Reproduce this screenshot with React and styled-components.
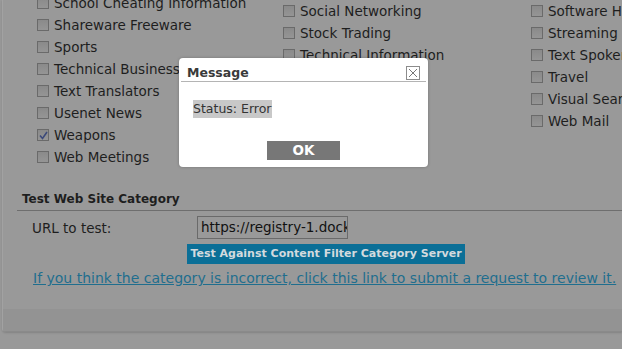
import React from "react";
import styled, { createGlobalStyle } from "styled-components";

const GlobalStyle = createGlobalStyle`
    html, body {
        margin: 0;
        padding: 0;
        background: #999999;
        overflow: hidden;
    }
    body {
        font-family: "DejaVu Sans", "Liberation Sans", sans-serif;
        color: #1e1e1e;
    }
`;

const Page = styled.div`
    position: relative;
    width: 622px;
    height: 349px;
    overflow: hidden;
`;

const Panel = styled.div`
    margin-left: 2px;
    height: 331px;
    border-left: 1px solid #a2a2a2;
    border-bottom: 1px solid #8a8a8a;
    border-radius: 0 0 0 4px;
    display: flex;
    flex-direction: column;
    box-shadow: 0 1px 2px rgba(0, 0, 0, 0.15);
`;

const Grid = styled.div`
    display: flex;
    margin-top: -8px;
`;

const Column = styled.div`
    width: ${(p) => p.width}px;
    padding-left: ${(p) => p.left}px;
    padding-top: ${(p) => p.top || 0}px;
    box-sizing: border-box;
    display: flex;
    flex-direction: column;
    flex-shrink: 0;
`;

const Item = styled.label`
    display: flex;
    align-items: center;
    height: 22px;
    font-size: 13.5px;
    white-space: nowrap;
`;

const Box = styled.span`
    width: 10px;
    height: 10px;
    border: 1px solid #6a6a6a;
    background: linear-gradient(#8a8a8a, #959595);
    margin-right: 5px;
    display: inline-flex;
    align-items: center;
    justify-content: center;
    flex-shrink: 0;
`;

const Section = styled.div`
    margin-top: 24px;
    padding-left: 14px;
    display: flex;
    flex-direction: column;
    align-items: flex-start;
`;

const SectionTitle = styled.div`
    align-self: stretch;
    font-weight: bold;
    font-size: 12px;
    padding: 0 0 4px 5px;
    border-bottom: 1px solid #6e6e6e;
`;

const FieldRow = styled.div`
    display: flex;
    align-items: center;
    margin-top: 5px;
    padding-left: 15px;
    font-size: 13.5px;
`;

const FieldLabel = styled.span`
    width: 165px;
`;

const UrlInput = styled.div`
    width: 151px;
    height: 23px;
    box-sizing: border-box;
    border: 1px solid #6a6a6a;
    padding: 0 3px;
    line-height: 21px;
    overflow: hidden;
    white-space: nowrap;
    color: #111;
`;

const CheckButton = styled.div`
    margin: 5px 0 0 170px;
    width: 278px;
    height: 20px;
    background: #0b6f97;
    color: #d3dade;
    font-weight: bold;
    font-size: 11px;
    text-align: center;
    line-height: 20px;
    white-space: nowrap;
`;

const ReviewLink = styled.a`
    display: block;
    margin: 6px 0 0 16px;
    font-size: 14px;
    color: #1f6e8e;
    text-decoration: underline;
    white-space: nowrap;
`;

const Footer = styled.div`
    margin-top: auto;
    height: 22px;
    background: #939393;
`;

const Dialog = styled.div`
    position: absolute;
    left: 179px;
    top: 58px;
    width: 249px;
    height: 109px;
    background: #ffffff;
    border-radius: 4px;
    box-shadow: 0 0 3px rgba(0, 0, 0, 0.25);
    display: flex;
    flex-direction: column;
`;

const DialogHeader = styled.div`
    height: 23px;
    margin: 0 2px;
    border-bottom: 1px solid #b4b4b4;
    display: flex;
    align-items: center;
    justify-content: space-between;
    padding: 0 6px;
`;

const DialogTitle = styled.span`
    font-weight: bold;
    font-size: 12.5px;
    color: #3a3a3a;
    margin-top: 6px;
`;

const CloseBox = styled.span`
    width: 12px;
    height: 12px;
    border: 1px solid #8c8c8c;
    display: flex;
    align-items: center;
    justify-content: center;
    margin-top: 6px;
`;

const DialogBody = styled.div`
    padding: 18px 14px 0;
    flex: 1;
    display: flex;
    flex-direction: column;
`;

const Status = styled.span`
    align-self: flex-start;
    background: #c8c8c8;
    color: #333;
    font-size: 12.5px;
    line-height: 18px;
`;

const OkButton = styled.div`
    margin: auto auto 7px;
    width: 73px;
    height: 19px;
    background: #777777;
    color: #fff;
    font-weight: bold;
    font-size: 13.5px;
    line-height: 19px;
    text-align: center;
`;

const Check = () => (
    <svg width="9" height="9" viewBox="0 0 9 9">
        <path d="M1 4.5 L3.5 7.5 L8 1" fill="none" stroke="#3c4a7a" strokeWidth="1.6" />
    </svg>
);

const CheckBox = ({ checked, children }) => (
    <Item>
        <Box>{checked && <Check />}</Box>
        {children}
    </Item>
);

const col1 = [
    "School Cheating Information",
    "Shareware Freeware",
    "Sports",
    "Technical Business",
    "Text Translators",
    "Usenet News",
    "Weapons",
    "Web Meetings",
];
const col2 = ["Social Networking", "Stock Trading", "Technical Information"];
const col3 = [
    "Software Hosting",
    "Streaming Media",
    "Text Spoken Only",
    "Travel",
    "Visual Search Engine",
    "Web Mail",
];

export default function App() {
    return (
        <Page>
            <GlobalStyle />
            <Panel>
                <Grid>
                    <Column width={246} left={34}>
                        {col1.map((c) => (
                            <CheckBox key={c} checked={c === "Weapons"}>
                                {c}
                            </CheckBox>
                        ))}
                    </Column>
                    <Column width={248} left={34} top={8}>
                        {col2.map((c) => (
                            <CheckBox key={c}>{c}</CheckBox>
                        ))}
                    </Column>
                    <Column width={200} left={34} top={8}>
                        {col3.map((c) => (
                            <CheckBox key={c}>{c}</CheckBox>
                        ))}
                    </Column>
                </Grid>
                <Section>
                    <SectionTitle>Test Web Site Category</SectionTitle>
                    <FieldRow>
                        <FieldLabel>URL to test:</FieldLabel>
                        <UrlInput>https://registry-1.docker.io</UrlInput>
                    </FieldRow>
                    <CheckButton>Test Against Content Filter Category Server</CheckButton>
                    <ReviewLink>
                        If you think the category is incorrect, click this link to submit a request to review it.
                    </ReviewLink>
                </Section>
                <Footer />
            </Panel>
            <Dialog>
                <DialogHeader>
                    <DialogTitle>Message</DialogTitle>
                    <CloseBox>
                        <svg width="10" height="10" viewBox="0 0 10 10">
                            <path d="M1 1 L9 9 M9 1 L1 9" stroke="#777" strokeWidth="1" />
                        </svg>
                    </CloseBox>
                </DialogHeader>
                <DialogBody>
                    <Status>Status: Error</Status>
                    <OkButton>OK</OkButton>
                </DialogBody>
            </Dialog>
        </Page>
    );
}
